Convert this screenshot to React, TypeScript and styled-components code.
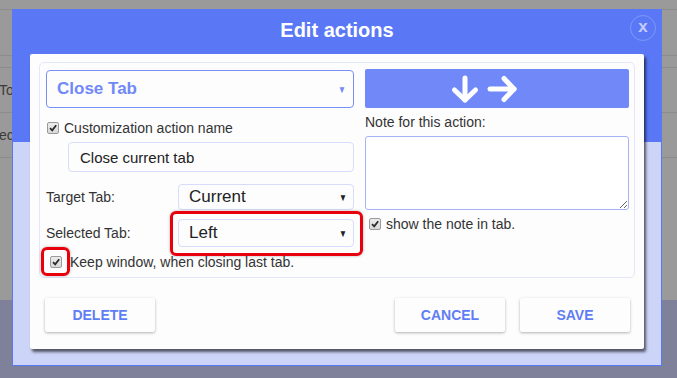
import React from 'react'
import styled, { createGlobalStyle } from 'styled-components'

const GlobalStyle = createGlobalStyle`
  html, body {
    margin: 0;
    padding: 0;
    width: 677px;
    height: 378px;
    overflow: hidden;
  }
  body {
    font-family: "Liberation Sans", Arial, sans-serif;
  }
`

const ArrowsIcon = () => (
  <svg width='68' height='30' viewBox='0 0 68 30' fill='none' stroke='#fff' strokeWidth='5' strokeLinecap='round' strokeLinejoin='round'>
    <path d='M15 4 V26' />
    <path d='M4.5 16 L15 26 L25.5 16' />
    <path d='M40 15 H64' />
    <path d='M54 4.5 L64 15 L54 25.5' />
  </svg>
)

const CheckMark = () => (
  <svg width='10' height='10' viewBox='0 0 10 10'>
    <path d='M2 5.2 L4.2 7.4 L8.2 2.2' fill='none' stroke='#2b2b2b' strokeWidth='1.8' />
  </svg>
)

const App = () => {
  return (
    <>
      <GlobalStyle />
      <Page>
        <BackdropTop>
          <BackRow $h={9} />
          <BackRow $h={45} />
          <BackRow $h={11} />
          <BackRow $h={44}>To</BackRow>
          <BackRow $h={44}>ec</BackRow>
        </BackdropTop>
        <BackdropBottom />

        <Overlay>
          <Header>
            <span />
            <Title>Edit actions</Title>
            <CloseButton>x</CloseButton>
          </Header>

          <Card>
            <Fieldset>
              <Column>
                <ActionSelect>
                  Close Tab
                  <Caret $color='#7088f8'>▼</Caret>
                </ActionSelect>

                <CheckRow $top={12}>
                  <Check><CheckMark /></Check>
                  <CheckLabel>Customization action name</CheckLabel>
                </CheckRow>

                <NameInput>Close current tab</NameInput>

                <FieldRow $top={12}>
                  <FieldLabel>Target Tab:</FieldLabel>
                  <SmallSelect $h={26}>
                    Current
                    <Caret $color='#222'>▼</Caret>
                  </SmallSelect>
                </FieldRow>

                <FieldRow $top={9}>
                  <FieldLabel>Selected Tab:</FieldLabel>
                  <Marked>
                    <SmallSelect $h={28}>
                      Left
                      <Caret $color='#222'>▼</Caret>
                    </SmallSelect>
                  </Marked>
                </FieldRow>

                <CheckRow $top={7}>
                  <MarkedCheck>
                    <Check><CheckMark /></Check>
                  </MarkedCheck>
                  <CheckLabel $gap={8}>Keep window, when closing last tab.</CheckLabel>
                </CheckRow>
              </Column>

              <Column>
                <ArrowButton>
                  <ArrowsIcon />
                </ArrowButton>
                <NoteLabel>Note for this action:</NoteLabel>
                <NoteArea readOnly defaultValue='' />
                <CheckRow $top={6} $indent={4}>
                  <Check><CheckMark /></Check>
                  <CheckLabel>show the note in tab.</CheckLabel>
                </CheckRow>
              </Column>
            </Fieldset>

            <Footer>
              <FlatButton>Delete</FlatButton>
              <Spacer />
              <FlatButton>Cancel</FlatButton>
              <FlatButton>Save</FlatButton>
            </Footer>
          </Card>
        </Overlay>
      </Page>
    </>
  )
}

export default App


const Page = styled.div`
  position: relative;
  width: 677px;
  height: 378px;
  overflow: hidden;
  display: flex;
  flex-direction: column;
  background: #9a9a9a;
`

const BackdropTop = styled.div`
  height: 300px;
  display: flex;
  flex-direction: column;
`

const BackRow = styled.div<{ $h: number }>`
  height: ${p => p.$h}px;
  border-bottom: 1px solid #8c8c8c;
  font-size: 14px;
  color: #3a3a3a;
  display: flex;
  align-items: center;
  margin-left: -1px;
`

const BackdropBottom = styled.div`
  flex: 1;
  background: #7e8199;
`

const Overlay = styled.div`
  position: absolute;
  left: 12px;
  top: 9px;
  width: 650px;
  height: 357px;
  box-sizing: border-box;
  border: 1px solid #5a78f5;
  background: linear-gradient(#5a78f5 0 132px, #ccd4f8 132px);
  display: flex;
  flex-direction: column;
`

const Header = styled.div`
  height: 44px;
  display: grid;
  grid-template-columns: 1fr auto 1fr;
  align-items: start;
`

const Title = styled.div`
  color: #fff;
  font-size: 20px;
  font-weight: bold;
  line-height: 24px;
  margin-top: 8px;
`

const CloseButton = styled.div`
  justify-self: end;
  margin: 5px 5px 0 0;
  width: 26px;
  height: 26px;
  border-radius: 50%;
  border: 1px solid rgba(255, 255, 255, 0.22);
  color: #c3ccfb;
  font-size: 17px;
  font-weight: bold;
  display: flex;
  align-items: center;
  justify-content: center;
  line-height: 1;
  padding-bottom: 3px;
  box-sizing: border-box;
`

const Card = styled.div`
  margin: 0 17px;
  height: 295px;
  background: #fdfdfe;
  border-radius: 2px;
  box-shadow: 2px 3px 3px rgba(0, 0, 0, 0.6);
  padding: 8px 9px 0;
  box-sizing: border-box;
  display: flex;
  flex-direction: column;
`

const Fieldset = styled.div`
  height: 216px;
  box-sizing: border-box;
  border: 1px solid #e4e7fb;
  border-radius: 5px;
  padding: 7px 4px 0 6px;
  display: grid;
  grid-template-columns: 308px 264px;
  column-gap: 11px;
  align-items: start;
`

const Column = styled.div`
  display: flex;
  flex-direction: column;
`

const Caret = styled.span<{ $color: string }>`
  margin-left: auto;
  font-size: 10px;
  transform: scaleX(0.8);
  color: ${p => p.$color};
`

const ActionSelect = styled.div`
  height: 38px;
  box-sizing: border-box;
  border: 1px solid #7b8ff7;
  border-radius: 4px;
  padding: 0 6px 0 10px;
  display: flex;
  align-items: center;
  font-size: 17px;
  font-weight: bold;
  color: #7088f8;
`

const CheckRow = styled.div<{ $top: number; $indent?: number }>`
  margin-top: ${p => p.$top}px;
  padding-left: ${p => p.$indent || 1}px;
  height: 16px;
  display: flex;
  align-items: center;
`

const Check = styled.span`
  width: 12px;
  height: 12px;
  box-sizing: border-box;
  border: 1px solid #9a9a9a;
  border-radius: 2px;
  background: linear-gradient(#ececec, #d9d9d9);
  display: flex;
  align-items: center;
  justify-content: center;
`

const CheckLabel = styled.span<{ $gap?: number }>`
  margin-left: ${p => p.$gap || 5}px;
  font-size: 14px;
  color: #333;
`

const NameInput = styled.div`
  margin: 6px 0 0 22px;
  height: 30px;
  box-sizing: border-box;
  border: 1px solid #d6dcf9;
  border-radius: 4px;
  padding-left: 11px;
  display: flex;
  align-items: center;
  font-size: 15px;
  color: #222;
`

const FieldRow = styled.div<{ $top: number }>`
  margin-top: ${p => p.$top}px;
  display: grid;
  grid-template-columns: 132px 1fr;
  align-items: center;
`

const FieldLabel = styled.span`
  font-size: 14px;
  color: #333;
`

const SmallSelect = styled.div<{ $h: number }>`
  height: ${p => p.$h}px;
  box-sizing: border-box;
  border: 1px solid #d6dcf9;
  border-radius: 4px;
  padding: 0 5px 0 10px;
  display: flex;
  align-items: center;
  font-size: 17px;
  color: #222;
`

const Marked = styled.div`
  position: relative;

  &::after {
    content: '';
    position: absolute;
    inset: -8px -9px -9px -8px;
    border: 3px solid #e8000c;
    border-radius: 6px;
    box-shadow: 0 0 3px rgba(0, 0, 0, 0.3);
  }
`

const MarkedCheck = styled.span`
  position: relative;
  margin-left: 3px;

  &::after {
    content: '';
    position: absolute;
    inset: -9px -8px -8px -9px;
    border: 3px solid #e8000c;
    border-radius: 6px;
    box-shadow: 0 0 3px rgba(0, 0, 0, 0.3);
  }
`

const ArrowButton = styled.div`
  margin-top: -1px;
  height: 39px;
  background: #7088f8;
  border-radius: 2px;
  display: flex;
  align-items: center;
  justify-content: center;
  padding-right: 26px;
`

const NoteLabel = styled.div`
  margin-top: 6px;
  font-size: 14px;
  line-height: 16px;
  color: #333;
`

const NoteArea = styled.textarea`
  margin-top: 6px;
  height: 74px;
  box-sizing: border-box;
  border: 1px solid #a6b4f5;
  border-radius: 3px;
  background: #fff;
  resize: both;
  outline: none;
  font-family: inherit;
`

const Footer = styled.div`
  margin-top: 20px;
  padding: 0 5px 0 6px;
  display: flex;
  gap: 15px;
`

const Spacer = styled.div`
  flex: 1;
`

const FlatButton = styled.div`
  width: 110px;
  height: 34px;
  border-radius: 2px;
  background: #fdfdfd;
  box-shadow: 0 1px 3px rgba(0, 0, 0, 0.3);
  display: flex;
  align-items: center;
  justify-content: center;
  text-transform: uppercase;
  font-size: 14px;
  font-weight: bold;
  color: #5f7ef5;
`
